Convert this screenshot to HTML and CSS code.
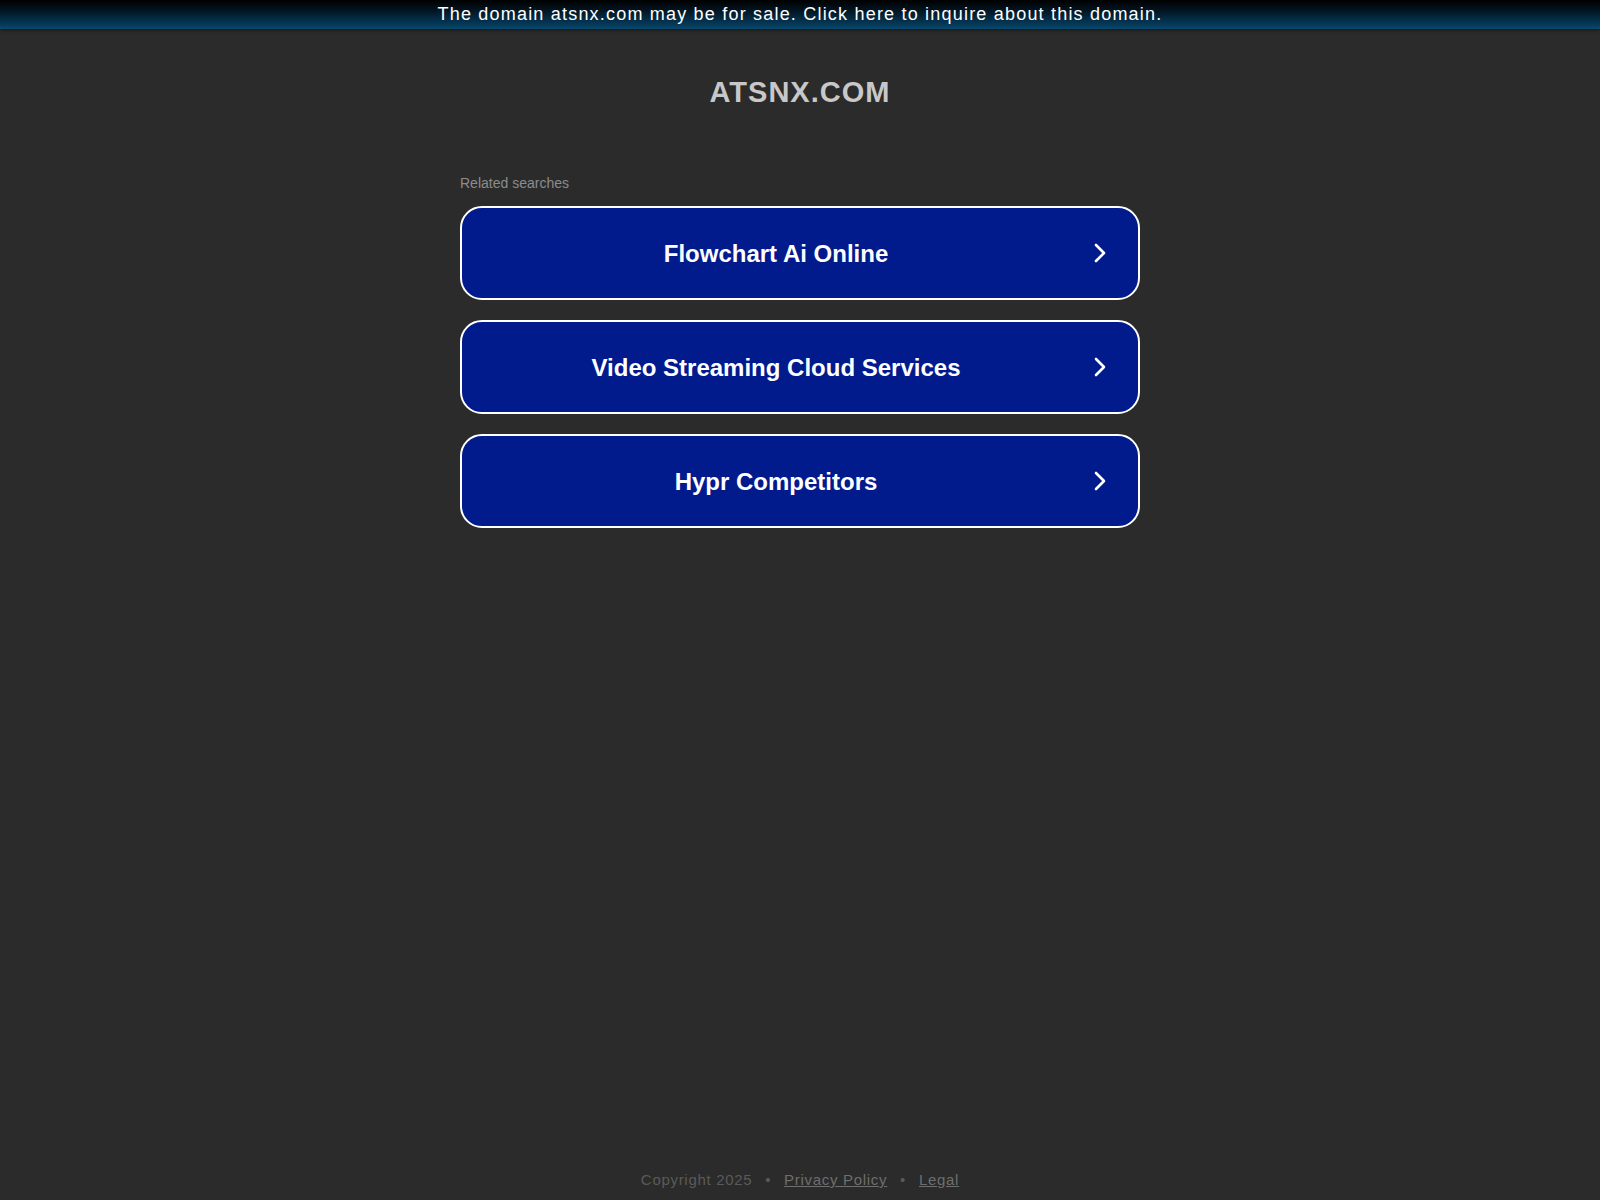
FILE: index.html
```html
<!DOCTYPE html>
<html lang="en">
<head>
<meta charset="utf-8">
<title>atsnx.com</title>
<link rel="stylesheet" href="styles.css">
</head>
<body>
<div class="topbar"><a href="#">The domain atsnx.com may be for sale. Click here to inquire about this domain.</a></div>
<main class="container">
  <h1 class="domain">ATSNX.COM</h1>
  <div class="related">
    <p class="related-title">Related searches</p>
    <a class="search" href="#"><span class="label">Flowchart Ai Online</span><svg class="chev" width="12" height="20" viewBox="0 0 12 20"><path d="M2 2 L10 10 L2 18" fill="none" stroke="#fff" stroke-width="2.6" stroke-linecap="round" stroke-linejoin="round"/></svg></a>
    <a class="search" href="#"><span class="label">Video Streaming Cloud Services</span><svg class="chev" width="12" height="20" viewBox="0 0 12 20"><path d="M2 2 L10 10 L2 18" fill="none" stroke="#fff" stroke-width="2.6" stroke-linecap="round" stroke-linejoin="round"/></svg></a>
    <a class="search" href="#"><span class="label">Hypr Competitors</span><svg class="chev" width="12" height="20" viewBox="0 0 12 20"><path d="M2 2 L10 10 L2 18" fill="none" stroke="#fff" stroke-width="2.6" stroke-linecap="round" stroke-linejoin="round"/></svg></a>
  </div>
</main>
<footer class="footer">Copyright 2025 <span class="dot">•</span> <a href="#">Privacy Policy</a> <span class="dot">•</span> <a href="#">Legal</a></footer>
</body>
</html>
```
FILE: styles.css
```css
html, body {
  margin: 0;
  padding: 0;
  height: 100%;
}
body {
  background: #2b2b2b;
  font-family: Arial, "Liberation Sans", sans-serif;
  display: flex;
  flex-direction: column;
  min-height: 1200px;
}
.topbar {
  height: 29px;
  background: linear-gradient(to bottom, #000 0%, #02111c 30%, #053a5a 85%, #0a4a6c 100%);
  box-shadow: 0 1px 3px rgba(0,0,0,0.6);
  text-align: center;
  line-height: 29px;
}
.topbar a {
  color: #fff;
  text-decoration: none;
  font-size: 18px;
  letter-spacing: 1.2px;
}
.container {
  width: 680px;
  margin: 0 auto;
  flex: 1;
}
.domain {
  margin: 43px 0 0;
  text-align: center;
  font-size: 29px;
  line-height: 40px;
  font-weight: bold;
  color: #c8c8c8;
  letter-spacing: 1px;
}
.related {
  margin-top: 63px;
}
.related-title {
  margin: 0 0 15px;
  font-size: 14px;
  line-height: 16px;
  color: #8c8c8c;
}
.search {
  display: flex;
  align-items: center;
  height: 90px;
  box-sizing: content-box;
  margin-bottom: 20px;
  background: #011a8c;
  border: 2px solid #fff;
  border-radius: 22px;
  padding-left: 20px;
  padding-right: 32px;
  text-decoration: none;
}
.label {
  flex: 1;
  text-align: center;
  color: #fff;
  font-size: 24px;
  font-weight: bold;
  margin-right: 24px;
  padding-top: 2px;
}
.chev {
  display: block;
  flex: none;
}
.footer {
  text-align: center;
  font-size: 15px;
  letter-spacing: 0.7px;
  color: #5a5a5a;
  padding-bottom: 11px;
  line-height: 18px;
}
.footer a {
  color: #6e6e6e;
}
.footer .dot {
  margin: 0 8px;
}
```
